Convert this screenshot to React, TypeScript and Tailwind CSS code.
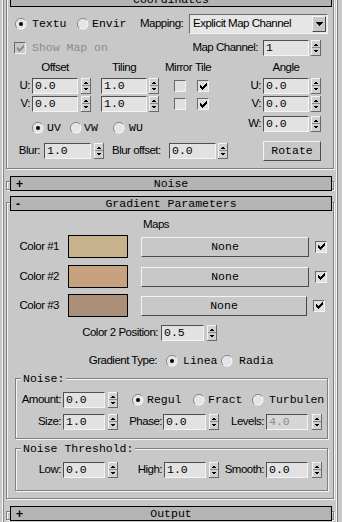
import React from "react";

const SANS =
  "font-['Liberation_Sans',Arial,sans-serif] text-[11.5px] tracking-[-0.5px] leading-none text-black whitespace-nowrap";
const MONO =
  "font-['Liberation_Mono',monospace] text-[11.5px] leading-none whitespace-nowrap";

function Field({ cls, value, disabled }: { cls: string; value: string; disabled?: boolean }) {
  return (
    <div
      className={
        "h-[16px] shrink-0 border border-t-[#505050] border-l-[#505050] border-b-[#f4f4f4] border-r-[#f4f4f4] flex items-center pl-[2px] overflow-hidden " +
        (disabled ? "bg-[#d6d6d6] " : "bg-[#e2e2e2] ") +
        cls
      }
    >
      <span className={MONO + (disabled ? " text-[#8c8c8c]" : " text-black")}>{value}</span>
    </div>
  );
}

function Spin({ cls = "" }: { cls?: string }) {
  return (
    <svg width="10" height="16" viewBox="0 0 10 16" shapeRendering="crispEdges" className={"shrink-0 " + cls}>
      <rect x="0" y="0" width="10" height="16" fill="#6a6a6a" />
      <rect x="0" y="0" width="9" height="15" fill="#f4f4f4" />
      <rect x="1" y="1" width="8" height="14" fill="#d0d0d0" />
      <rect x="1" y="7" width="8" height="1" fill="#8a8a8a" />
      <path d="M3 5h4v1H3zM4 4h2v1H4z" fill="#000" />
      <path d="M3 10h4v1H3zM4 11h2v1H4z" fill="#000" />
    </svg>
  );
}

const CHECK_PIX = [
  "......X",
  ".....XX",
  "X...XXX",
  "XX.XXX.",
  "XXXXX..",
  ".XXX...",
  "..X....",
];

function Check({ checked, disabled, cls = "" }: { checked?: boolean; disabled?: boolean; cls?: string }) {
  return (
    <div
      className={
        "w-[12px] h-[12px] shrink-0 border border-t-[#6a6a6a] border-l-[#6a6a6a] border-b-[#f4f4f4] border-r-[#f4f4f4] flex items-center justify-center " +
        (disabled ? "bg-[#c8c8c8] " : "bg-[#e0e0e0] ") +
        cls
      }
    >
      {checked && (
        <svg width="7" height="7" viewBox="0 0 7 7" shapeRendering="crispEdges">
          {CHECK_PIX.map((row, y) =>
            row.split("").map((c, x) =>
              c === "X" ? (
                <rect key={x + "-" + y} x={x} y={y} width="1" height="1" fill={disabled ? "#8c8c8c" : "#000"} />
              ) : null
            )
          )}
        </svg>
      )}
    </div>
  );
}

function Radio({ on, cls = "" }: { on?: boolean; cls?: string }) {
  return (
    <svg width="12" height="12" viewBox="0 0 12 12" className={"shrink-0 " + cls}>
      <circle cx="6" cy="6" r="5.5" fill="#f4f4f4" />
      <path d="M2.1 9.9 A5.5 5.5 0 0 1 9.9 2.1" stroke="#808080" fill="none" strokeWidth="1" />
      <circle cx="6" cy="6" r="4.4" fill="#e4e4e4" />
      {on && <circle cx="6" cy="6" r="2" fill="#000" />}
    </svg>
  );
}

function Button({ cls, children }: { cls: string; children: React.ReactNode }) {
  return (
    <div
      className={
        "h-[20px] shrink-0 border border-t-[#f4f4f4] border-l-[#f4f4f4] border-b-[#4a4a4a] border-r-[#4a4a4a] bg-[#c8c8c8] flex items-center justify-center " +
        cls
      }
    >
      <span className={MONO + " text-black"}>{children}</span>
    </div>
  );
}

function Title({ sign, text }: { sign: string; text: string }) {
  return (
    <div className="w-[322px] h-[15px] ml-[3px] border border-black bg-[#b4b4b4] grid grid-cols-[20px_1fr_20px] items-center">
      <span className="pl-[5px] font-['Liberation_Sans',sans-serif] font-bold text-[12px] leading-none text-black">
        {sign}
      </span>
      <span className={MONO + " text-center text-black"}>{text}</span>
      <span />
    </div>
  );
}

const FRAME = "border border-[#808080] shadow-[inset_1px_1px_0_#f4f4f4,1px_1px_0_#f4f4f4]";

function Swatch({ color }: { color: string }) {
  return <div className={"w-[60px] h-[23px] ml-[8px] border border-black shrink-0 " + color} />;
}

function ColorRow({ label, color, mt, bw }: { label: string; color: string; mt: string; bw: string }) {
  return (
    <div className={"flex items-center h-[23px] " + mt}>
      <span className={SANS + " w-[53px] text-right pr-[1px]"}>{label}</span>
      <Swatch color={color} />
      <Button cls={"ml-[13px] " + bw}>None</Button>
      <Check checked cls="ml-[6px]" />
    </div>
  );
}

export default function App() {
  return (
    <div className="w-[342px] h-[522px] overflow-hidden bg-[#c8c8c8]">
      <div className="ml-[2px] w-[336px] h-[522px] border-l border-l-[#f4f4f4] border-r border-r-[#808080]">
        <div className="h-full border-l border-l-[#8a8a8a] border-r border-r-[#f4f4f4] overflow-hidden">
          {/* Coordinates */}
          <div className="ml-[2px] w-[328px]">
            <div className={"-mt-[2px] " + FRAME}>
              <div className="-mt-[7px]">
                <Title sign="" text="Coordinates" />
              </div>
              <div className="flex items-center h-[20px] mt-[7px]">
                <Radio on cls="ml-[8px]" />
                <span className={MONO + " ml-[5px] w-[37px]"}>Textu</span>
                <Radio cls="ml-[8px]" />
                <span className={MONO + " ml-[3px] w-[48px]"}>Envir</span>
                <span className={SANS + " w-[49px]"}>Mapping:</span>
                <div className="w-[139px] h-[20px] shrink-0 border border-t-[#6a6a6a] border-l-[#6a6a6a] border-b-[#f4f4f4] border-r-[#f4f4f4] bg-[#e6e6e6] flex items-center">
                  <span className={SANS + " pl-[3px]"}>Explicit Map Channel</span>
                  <div className="ml-auto mr-[1px] w-[14px] h-[16px] border border-t-[#f4f4f4] border-l-[#f4f4f4] border-b-[#4a4a4a] border-r-[#4a4a4a] bg-[#c8c8c8] flex items-center justify-center">
                    <svg width="7" height="4" viewBox="0 0 7 4" shapeRendering="crispEdges">
                      <path d="M0 0h7v1H0zM1 1h5v1H1zM2 2h3v1H2zM3 3h1v1H3z" fill="#000" />
                    </svg>
                  </div>
                </div>
              </div>
              <div className="flex items-center h-[16px] mt-[6px]">
                <Check checked disabled cls="ml-[7px]" />
                <span className={MONO + " ml-[6px] text-[#8c8c8c]"}>Show Map on</span>
                <span className={SANS + " ml-auto"}>Map Channel:</span>
                <Field cls="w-[46px] ml-[5px]" value="1" />
                <Spin cls="ml-[2px] mr-[12px]" />
              </div>
              <div className="flex mt-[6px]">
                <div className="w-[236px] shrink-0">
                  <div className="flex items-center h-[12px]">
                    <span className={SANS + " ml-[25px] w-[46px] text-center"}>Offset</span>
                    <span className={SANS + " ml-[23px] w-[46px] text-center"}>Tiling</span>
                    <span className={SANS + " ml-[18px] w-[30px]"}>Mirror</span>
                    <span className={SANS}>Tile</span>
                  </div>
                  {[
                    ["U:", "mt-[4px]"],
                    ["V:", "mt-[2px]"],
                  ].map(([l, mt]) => (
                    <div key={l} className={"flex items-center h-[16px] " + mt}>
                      <span className={SANS + " w-[25px] text-right pr-[2px]"}>{l}</span>
                      <Field cls="w-[46px]" value="0.0" />
                      <Spin cls="ml-[3px]" />
                      <Field cls="w-[46px] ml-[10px]" value="1.0" />
                      <Spin cls="ml-[2px]" />
                      <Check cls="ml-[15px]" />
                      <Check checked cls="ml-[11px]" />
                    </div>
                  ))}
                  <div className="flex items-center h-[12px] mt-[10px]">
                    <Radio on cls="ml-[25px]" />
                    <span className={MONO + " ml-[3px] w-[22px]"}>UV</span>
                    <Radio cls="ml-[1px]" />
                    <span className={MONO + " ml-[2px] w-[28px]"}>VW</span>
                    <Radio cls="ml-[1px]" />
                    <span className={MONO + " ml-[4px]"}>WU</span>
                  </div>
                </div>
                <div className="flex-1">
                  <div className="flex items-center h-[12px]">
                    <span className={SANS + " ml-[20px] w-[46px] text-center"}>Angle</span>
                  </div>
                  {[
                    ["U:", "mt-[4px]"],
                    ["V:", "mt-[2px]"],
                    ["W:", "mt-[4px]"],
                  ].map(([l, mt]) => (
                    <div key={l} className={"flex items-center h-[16px] " + mt}>
                      <span className={SANS + " w-[20px] text-right pr-[2px]"}>{l}</span>
                      <Field cls="w-[46px]" value="0.0" />
                      <Spin cls="ml-[2px]" />
                    </div>
                  ))}
                </div>
              </div>
              <div className="flex items-center h-[20px] mt-[7px] mb-[7px]">
                <span className={SANS + " w-[37px] text-right pr-[4px]"}>Blur:</span>
                <Field cls="w-[47px]" value="1.0" />
                <Spin cls="ml-[3px]" />
                <span className={SANS + " ml-[8px] w-[57px]"}>Blur offset:</span>
                <Field cls="w-[47px]" value="0.0" />
                <Spin cls="ml-[2px]" />
                <Button cls="ml-auto mr-[12px] w-[58px]">Rotate</Button>
              </div>
            </div>
          </div>

          {/* Noise (collapsed) */}
          <div className="ml-[2px] w-[328px]">
            <div className={"mt-[12px] h-[9px] " + FRAME}>
              <div className="-mt-[6px]">
                <Title sign="+" text="Noise" />
              </div>
            </div>
          </div>

          {/* Gradient Parameters */}
          <div className="ml-[2px] w-[328px]">
            <div className={"mt-[12px] " + FRAME}>
              <div className="-mt-[7px]">
                <Title sign="-" text="Gradient Parameters" />
              </div>
              <div className="flex items-center h-[14px] mt-[7px]">
                <span className={SANS + " ml-[136px]"}>Maps</span>
              </div>
              <ColorRow label="Color #1" color="bg-[#c6b38b]" mt="mt-[3px]" bw="w-[168px]" />
              <ColorRow label="Color #2" color="bg-[#c6a27e]" mt="mt-[7px]" bw="w-[168px]" />
              <ColorRow label="Color #3" color="bg-[#ab8f78]" mt="mt-[6px]" bw="w-[166px]" />
              <div className="flex items-center h-[16px] mt-[8px]">
                <span className={SANS + " w-[154px] text-right pr-[3px]"}>Color 2 Position:</span>
                <Field cls="w-[43px]" value="0.5" />
                <Spin cls="ml-[3px]" />
              </div>
              <div className="flex items-center h-[12px] mt-[14px]">
                <span className={SANS + " w-[155px] text-right pr-[5px]"}>Gradient Type:</span>
                <Radio on cls="ml-[4px]" />
                <span className={MONO + " ml-[5px] w-[35px]"}>Linea</span>
                <Radio cls="ml-[3px]" />
                <span className={MONO + " ml-[6px] w-[35px]"}>Radia</span>
              </div>

              <fieldset className={"ml-[8px] w-[313px] mt-[6px] pb-[8px] " + FRAME}>
                <legend className={MONO + " ml-[5px] px-[2px] leading-[12px] bg-[#c8c8c8] text-black"}>Noise:</legend>
                <div className="flex items-center h-[16px] mt-[7px]">
                  <span className={SANS + " w-[47px] text-right pr-[2px]"}>Amount:</span>
                  <Field cls="w-[42px]" value="0.0" />
                  <Spin cls="ml-[3px]" />
                  <Radio on cls="ml-[14px]" />
                  <span className={MONO + " ml-[3px] w-[38px]"}>Regul</span>
                  <Radio cls="ml-[8px]" />
                  <span className={MONO + " ml-[3px] w-[35px]"}>Fract</span>
                  <Radio cls="ml-[9px]" />
                  <span className={MONO + " ml-[5px] w-[55px]"}>Turbulen</span>
                </div>
                <div className="flex items-center h-[16px] mt-[6px]">
                  <span className={SANS + " w-[47px] text-right pr-[2px]"}>Size:</span>
                  <Field cls="w-[42px]" value="1.0" />
                  <Spin cls="ml-[3px]" />
                  <span className={SANS + " w-[45px] text-right pr-[1px]"}>Phase:</span>
                  <Field cls="w-[43px]" value="0.0" />
                  <Spin cls="ml-[3px]" />
                  <span className={SANS + " w-[47px] text-right pr-[2px]"}>Levels:</span>
                  <Field cls="w-[42px]" value="4.0" disabled />
                  <Spin cls="ml-[4px]" />
                </div>
              </fieldset>

              <fieldset className={"ml-[8px] w-[313px] mt-[4px] pb-[12px] mb-[7px] " + FRAME}>
                <legend className={MONO + " ml-[5px] px-[2px] leading-[12px] bg-[#c8c8c8] text-black"}>
                  Noise Threshold:
                </legend>
                <div className="flex items-center h-[16px] mt-[8px]">
                  <span className={SANS + " w-[47px] text-right pr-[2px]"}>Low:</span>
                  <Field cls="w-[42px]" value="0.0" />
                  <Spin cls="ml-[3px]" />
                  <span className={SANS + " w-[46px] text-right pr-[2px]"}>High:</span>
                  <Field cls="w-[42px]" value="1.0" />
                  <Spin cls="ml-[3px]" />
                  <span className={SANS + " w-[47px] text-right pr-[2px]"}>Smooth:</span>
                  <Field cls="w-[42px]" value="0.0" />
                  <Spin cls="ml-[4px]" />
                </div>
              </fieldset>
            </div>
          </div>

          {/* Output (collapsed) */}
          <div className="ml-[2px] w-[328px]">
            <div className={"mt-[12px] h-[9px] " + FRAME}>
              <div className="-mt-[6px]">
                <Title sign="+" text="Output" />
              </div>
            </div>
          </div>
        </div>
      </div>
    </div>
  );
}
